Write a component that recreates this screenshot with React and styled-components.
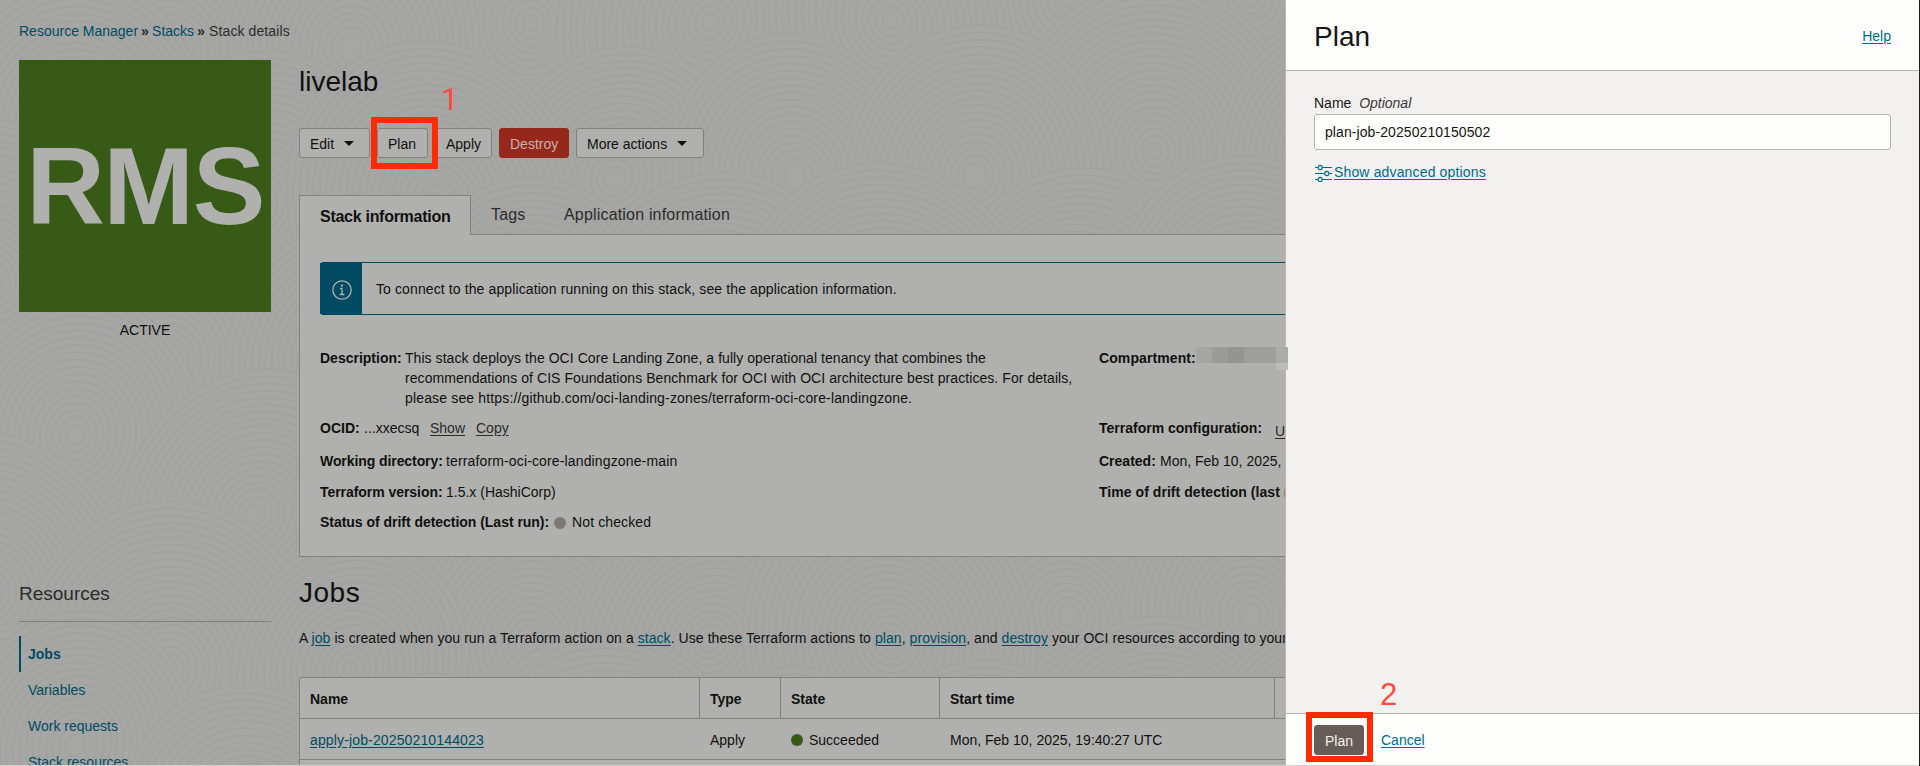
import React from "react";
import styled, { createGlobalStyle, css } from "styled-components";

const c = {
  page: "#a6a6a4", panel: "#b0b0ae", line: "#848080", text: "#10100f", soft: "#2c2b2a",
  teal: "#004b63", link: "#006b8f", green: "#375b17", red: "#96281b", mark: "#ff2a00", markText: "#ff4a40",
};

const Global = createGlobalStyle`
  *{box-sizing:border-box}
  body{margin:0;background:${c.page};overflow:hidden}
  body,button,input{font-family:"Liberation Sans",Arial,sans-serif;font-size:14px}
  h1,h2,p,ul{margin:0;padding:0;font-weight:400}
`;

const Screen = styled.div`position:relative;width:1920px;height:766px;overflow:hidden;color:${c.text};background:${c.page};isolation:isolate;`;
const Waves = styled.svg`position:absolute;inset:0;z-index:-1;`;
const Page = styled.div`padding:21px 0 0 19px;`;
const T = styled.span`letter-spacing:${p => p.$ls || 0}px;`;
const Link = styled.a`color:${p => p.$c || c.teal};text-decoration:${p => p.$plain ? "none" : "underline"};text-underline-offset:2px;letter-spacing:${p => p.$ls || 0}px;`;

const Crumbs = styled.nav`display:flex;height:20px;line-height:20px;color:${c.soft};white-space:pre;`;
const Sep = styled.span`width:${p => p.$w}px;padding-left:3px;font-size:14px;font-weight:700;letter-spacing:-1px;color:${c.soft};`;
const Columns = styled.div`display:flex;gap:28px;margin-top:19px;`;
const Side = styled.aside`width:252px;flex:none;`;
const Logo = styled.div`height:252px;background:${c.green};color:${c.panel};font-weight:700;font-size:109px;letter-spacing:-1.5px;line-height:252px;text-align:center;`;
const Active = styled.div`text-align:center;line-height:20px;margin-top:8px;`;
const ResTitle = styled.h2`font-size:19px;line-height:24px;margin-top:242px;border-bottom:1px solid ${c.line};height:40px;color:${c.soft};`;
const ResList = styled.ul`list-style:none;margin-top:14px;`;
const ResItem = styled.li`height:36px;line-height:36px;padding-left:${p => p.$on ? 7 : 9}px;color:${c.teal};${p => p.$on && css`border-left:2px solid ${c.teal};font-weight:700;`}`;

const Main = styled.main`width:1400px;flex:none;`;
const Title = styled.h1`font-size:28px;line-height:36px;letter-spacing:${p => p.$ls || 0}px;`;
const StackTitle = styled(Title)`padding-top:4px;`;
const Toolbar = styled.div`display:flex;gap:7px;margin-top:28px;`;
const Btn = styled.button`width:${p => p.$w}px;height:30px;padding:1px 0 0 10px;display:flex;align-items:center;gap:10px;border-radius:3px;border:1px solid ${p => p.$bg || c.line};background:${p => p.$bg || c.panel};color:${p => p.$fg || c.text};white-space:nowrap;`;
const Caret = styled.i`width:0;height:0;border:5px solid transparent;border-top-color:${c.text};border-bottom:0;`;
const Tabs = styled.div`display:flex;height:40px;margin-top:37px;position:relative;z-index:1;margin-bottom:-1px;font-size:16px;color:${c.soft};line-height:39px;letter-spacing:0.18px;`;
const Tab = styled.div`padding:${p => p.$on ? "1px 0 0 20px" : "0 0 0 20px"};width:${p => p.$w}px;white-space:nowrap;${p => p.$on && css`border:1px solid ${c.line};border-bottom:0;background:${c.panel};color:${c.text};font-weight:700;letter-spacing:-0.28px;`}`;
const Panel = styled.section`height:323px;border:1px solid ${c.line};background:${c.panel};padding:27px 20px 0;`;
const Notice = styled.div`height:53px;display:flex;border:1px solid ${c.teal};border-radius:3px;align-items:center;`;
const NoticeIcon = styled.div`width:42px;margin-left:-1px;align-self:stretch;display:flex;align-items:center;justify-content:center;background:${c.teal};margin-right:14px;padding:2px 0 0 2px;`;
const Facts = styled.div`display:grid;grid-template-columns:779px 500px;margin-top:33px;grid-template-rows:70px 33px 31px 30px 30px;`;
const Fact = styled.div`display:flex;line-height:20px;white-space:nowrap;letter-spacing:${p => p.$ls || 0}px;`;
const Label = styled.b`width:${p => p.$w}px;flex:none;letter-spacing:${p => p.$ls || 0}px;`;
const Ocid = styled.span`width:66px;`;
const ShowLink = styled(Link)`width:46px;`;
const LoweredLink = styled(Link)`padding-top:3px;`;
const Dot = styled.i`width:12px;height:12px;border-radius:50%;background:${p => p.$c};margin:${p => p.$m || "0"};flex:none;`;
const Lines = styled.div`display:flex;flex-direction:column;`;
const JobsTitle = styled(Title)`margin-top:18px;`;
const Para = styled.p`margin-top:17px;line-height:20px;white-space:nowrap;letter-spacing:0.065px;a{letter-spacing:inherit}`;
const Table = styled.div`margin-top:29px;border:1px solid ${c.line};border-bottom:0;border-radius:3px 0 0 0;background:${c.panel};`;
const Row = styled.div`display:grid;grid-template-columns:400px 81px 159px 335px 1fr;height:41px;border-bottom:1px solid ${c.line};`;
const Cell = styled.div`padding:1px 0 0 10px;display:flex;align-items:center;white-space:nowrap;${p => p.$head && css`font-weight:700;border-right:1px solid ${c.line};`}`;

const Drawer = styled.aside`position:absolute;left:1285px;top:0;width:634px;height:765px;display:flex;flex-direction:column;border-left:1px solid #bcb6b1;background:#f3f1f0;color:#161513;`;
const DHead = styled.header`height:71px;flex:none;display:flex;justify-content:space-between;align-items:center;padding:2px 28px 0;background:#fefefd;border-bottom:1px solid #b8b3b0;`;
const DrawerTitle = styled(Title)`padding-top:2px;`;
const DBody = styled.div`flex:1;padding:22px 28px 0;`;
const FieldLabel = styled.label`display:block;line-height:20px;white-space:pre;i{color:#3a3836}`;
const Field = styled.input`width:577px;height:36px;display:block;margin-top:1px;border:1px solid #b8b3b0;border-radius:3px;background:#fefefd;padding:0 10px;color:#161513;letter-spacing:0.08px;`;
const Advanced = styled.div`display:flex;align-items:center;margin-top:13px;height:20px;gap:2px;`;
const AdvLink = styled(Link)`margin-top:-2px;`;
const DFoot = styled.footer`height:52px;flex:none;border-top:1px solid #b8b3b0;background:#fefefd;display:flex;gap:17px;padding:11px 28px;align-items:flex-start;line-height:30px;`;
const Mark = styled.div`position:absolute;left:${p => p.$x}px;top:${p => p.$y}px;width:67px;height:${p => p.$h}px;border:6px solid ${c.mark};`;
const Num = styled.div`position:absolute;left:${p => p.$x}px;top:${p => p.$y}px;font-family:${p => p.$f || '"Liberation Sans"'},sans-serif;font-size:31px;line-height:36px;color:${c.markText};`;
const Mosaic = styled.div`position:absolute;left:1196px;top:347px;display:flex;`;
const Tile = styled.i`width:${p => p.$w}px;height:16px;background:${p => p.$c};${p => p.$under && css`height:23px;border-bottom:7px solid ${p.$under};`}`;
const BottomEdge = styled.div`position:absolute;left:0;top:765px;width:1920px;height:1px;background:#d2d2d1;`;
const RightEdge = styled.div`position:absolute;right:0;top:0;width:1px;height:766px;background:#1b1b1b;`;

const swirls = [];
for (let r = 0; r < 6; r++) for (let k = 0; k < 8; k++) swirls.push([((k * 3) % 8) * 180 + (r % 2) * 85 - 10, r * 155 + ((k * 53) % 80) - 30, 115 + ((k * 29 + r * 17) % 40)]);

function Pattern() {
  return (
    <Waves width="1920" height="766">
      {swirls.map(([x, y, r], i) => (
        <g key={i} fill={c.page} stroke="#a2a2a1" strokeWidth="1.8">
          {Array.from({ length: Math.floor(r / 6.5) }, (_, n) => <ellipse key={n} cx={x} cy={y} rx={r - n * 6.5} ry={(r - n * 6.5) * 1.12} transform={`rotate(${(i * 31) % 70 - 35} ${x} ${y})`} />)}
        </g>
      ))}
    </Waves>
  );
}

export default function App() {
  return (
    <Screen>
      <Global />
      <Pattern />
      <Page>
        <Crumbs><Link $plain>Resource Manager</Link><Sep $w={14}>»</Sep><Link $plain>Stacks</Link><Sep $w={15}>»</Sep><T $ls={0.1}>Stack details</T></Crumbs>
        <Columns>
          <Side>
            <Logo>RMS</Logo>
            <Active>ACTIVE</Active>
            <ResTitle>Resources</ResTitle>
            <ResList>
              <ResItem $on>Jobs</ResItem><ResItem>Variables</ResItem><ResItem>Work requests</ResItem><ResItem>Stack resources</ResItem>
            </ResList>
          </Side>
          <Main>
            <StackTitle>livelab</StackTitle>
            <Toolbar>
              <Btn $w={71}>Edit<Caret /></Btn><Btn $w={51}>Plan</Btn><Btn $w={57}>Apply</Btn>
              <Btn $w={70} $bg={c.red} $fg="#c3b3b0">Destroy</Btn><Btn $w={128}>More actions<Caret /></Btn>
            </Toolbar>
            <Tabs><Tab $on $w={172}>Stack information</Tab><Tab $w={73}>Tags</Tab><Tab $w={220}>Application information</Tab></Tabs>
            <Panel>
              <Notice>
                <NoticeIcon>
                  <svg width="20" height="20" viewBox="0 0 20 20" fill="none" stroke="#b0b0ae" strokeWidth="1.3"><circle cx="10" cy="10" r="9.2" /><path d="M8 8.300H10V14.300M7.600 14.500H12.400" /><path d="M10 4.500V6.500" strokeWidth="2" /></svg>
                </NoticeIcon>
                <T $ls={0.11}>To connect to the application running on this stack, see the application information.</T>
              </Notice>
              <Facts>
                <Fact><Label $w={85}>Description:</Label><Lines>
                  <T $ls={0.055}>This stack deploys the OCI Core Landing Zone, a fully operational tenancy that combines the</T>
                  <T $ls={0.065}>recommendations of CIS Foundations Benchmark for OCI with OCI architecture best practices. For details,</T>
                  <T $ls={0.155}>please see https://github.com/oci-landing-zones/terraform-oci-core-landingzone.</T></Lines></Fact>
                <Fact><Label $ls={0.1}>Compartment:</Label></Fact>
                <Fact><Label $w={44}>OCID:</Label><Ocid>...xxecsq</Ocid><ShowLink $c={c.soft}>Show</ShowLink><Link $c={c.soft}>Copy</Link></Fact>
                <Fact><Label $w={176}>Terraform configuration:</Label><LoweredLink $c={c.soft}>Upload zip</LoweredLink></Fact>
                <Fact $ls={0.14}><Label $w={126} $ls={-0.08}>Working directory:</Label>terraform-oci-core-landingzone-main</Fact>
                <Fact><Label $w={61}>Created:</Label>Mon, Feb 10, 2025, 18:58:12 UTC</Fact>
                <Fact><Label $w={126} $ls={-0.05}>Terraform version:</Label>1.5.x (HashiCorp)</Fact>
                <Fact $ls={0.05}><Label $ls={0.05}>Time of drift detection (last run):</Label></Fact>
                <Fact $ls={0.12}><Label $w={234} $ls={-0.03}>Status of drift detection (Last run):</Label><Dot $c="#7c7872" $m="5px 6px 0 0" />Not checked</Fact>
              </Facts>
            </Panel>
            <JobsTitle $ls={0.5}>Jobs</JobsTitle>
            <Para>A <Link>job</Link> is created when you run a Terraform action on a <Link>stack</Link>. Use these Terraform actions to <Link>plan</Link>, <Link>provision</Link>, and <Link>destroy</Link> your OCI resources according to your needs.</Para>
            <Table>
              <Row><Cell $head>Name</Cell><Cell $head>Type</Cell><Cell $head>State</Cell><Cell $head>Start time</Cell><Cell /></Row>
              <Row><Cell><Link $ls={0.14}>apply-job-20250210144023</Link></Cell><Cell>Apply</Cell><Cell><Dot $c={c.green} $m="0 6px 0 0" />Succeeded</Cell><Cell>Mon, Feb 10, 2025, 19:40:27 UTC</Cell><Cell /></Row>
              <Row />
            </Table>
          </Main>
        </Columns>
      </Page>
      <Drawer>
        <DHead><DrawerTitle>Plan</DrawerTitle><Link $c={c.link}>Help</Link></DHead>
        <DBody>
          <FieldLabel>Name  <i>Optional</i></FieldLabel>
          <Field readOnly value="plan-job-20250210150502" />
          <Advanced>
            <svg width="18" height="18" viewBox="0 0 18 18" fill="none" stroke={c.link} strokeWidth="1.1"><path d="M1 3.500H4M8.500 3.500H18M1 9.500H10.500M15 9.500H18M1 15.500H4M8.500 15.500H18" /><circle cx="6.200" cy="3.500" r="2.100" /><circle cx="12.800" cy="9.500" r="2.100" /><circle cx="6.200" cy="15.500" r="2.100" /></svg>
            <AdvLink $c={c.link} $ls={0.15}>Show advanced options</AdvLink>
          </Advanced>
        </DBody>
        <DFoot><Btn $w={50} $bg="#665d59" $fg="#f1efed">Plan</Btn><Link $c={c.link}>Cancel</Link></DFoot>
      </Drawer>
      <Mosaic><Tile $w={16} $c="#a5a5a3" /><Tile $w={16} $c="#9b9b99" /><Tile $w={16} $c="#949492" /><Tile $w={32} $c="#9e9e9c" /><Tile $w={12} $c="#acacaa" $under="#bbbbb9" /></Mosaic>
      <BottomEdge /><RightEdge />
      <Mark $x={370.5} $y={117} $h={52} /><Num $x={441} $y={82} $f="Roboto">1</Num>
      <Mark $x={1305.5} $y={712} $h={50} /><Num $x={1380} $y={677}>2</Num>
    </Screen>
  );
}
